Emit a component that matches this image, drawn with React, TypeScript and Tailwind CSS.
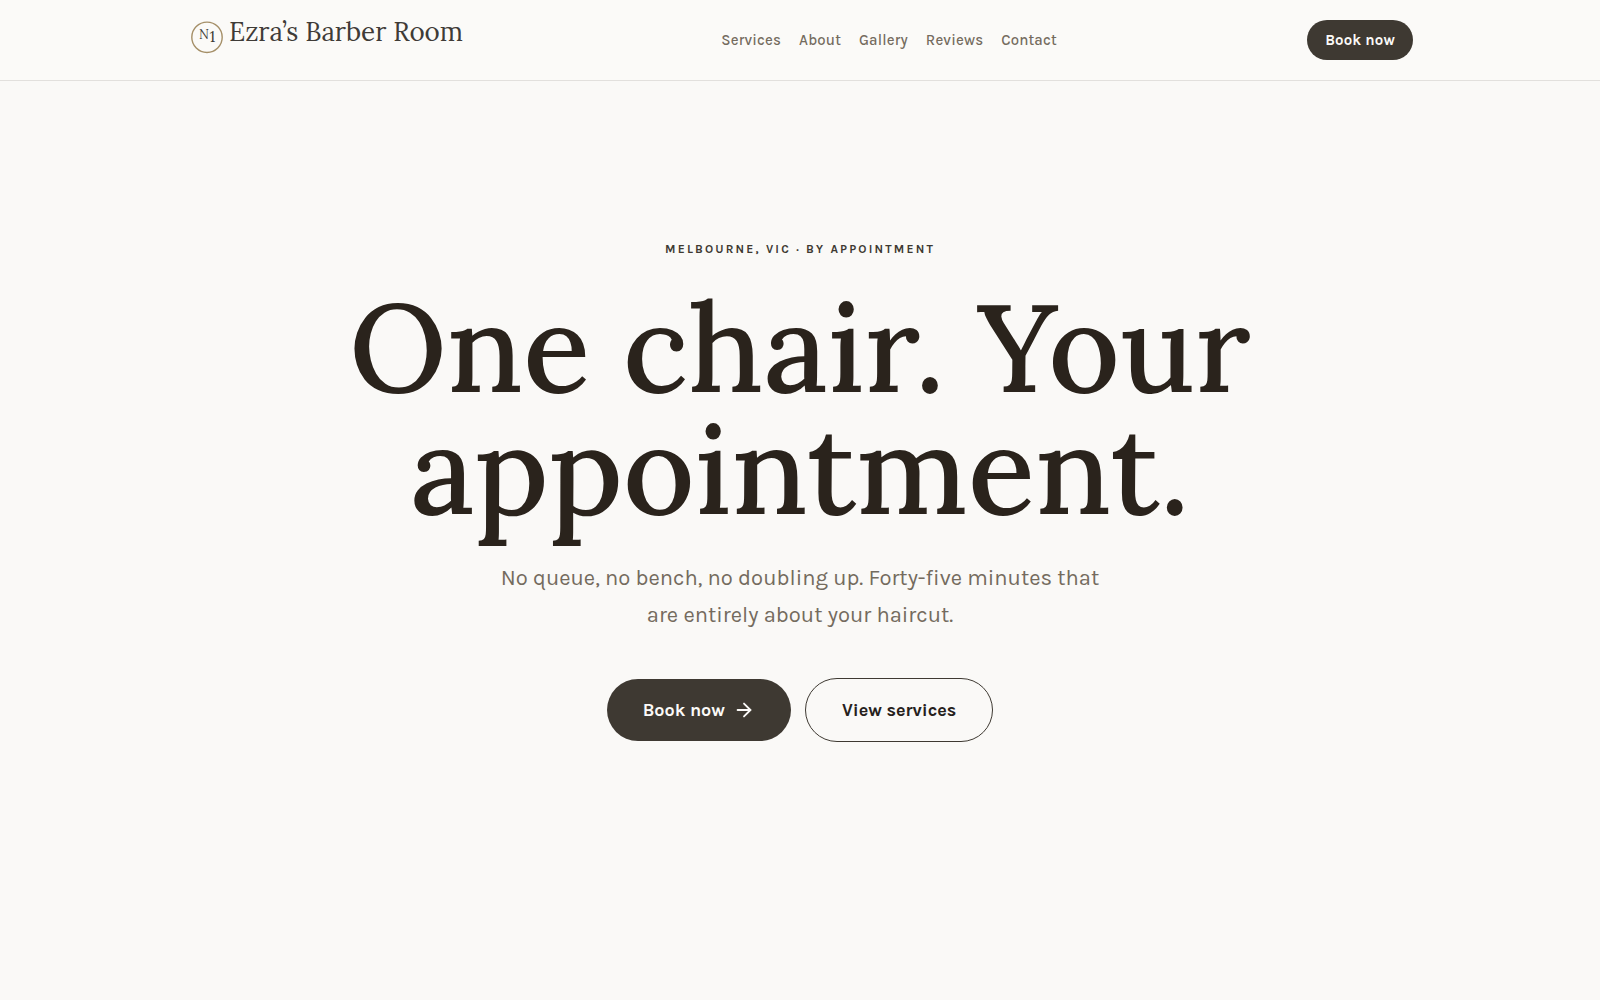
import React from 'react';
import { ArrowRight } from 'lucide-react';

interface NavItem {
  label: string;
  href: string;
}

const navItems: NavItem[] = [
  { label: 'Services', href: '#services' },
  { label: 'About', href: '#about' },
  { label: 'Gallery', href: '#gallery' },
  { label: 'Reviews', href: '#reviews' },
  { label: 'Contact', href: '#contact' }
];

const Logo: React.FC = () => (
  <a href="#top" aria-label="Ezra’s Barber Room" className="block shrink-0">
    <svg
      width="284"
      height="60"
      viewBox="0 -10 284 60"
      className="font-['Lora','Liberation_Serif',serif]"
    >
      <circle cx="20" cy="17.3" r="15.2" fill="none" stroke="#a58f68" strokeWidth="1.4" />
      <text x="12" y="19" fontSize="13" fill="#3f3b37">N</text>
      <text x="22.5" y="22" fontSize="16" fill="#3f3b37">1</text>
      <text x="42" y="21" fontSize="26" fill="#3f3b37">Ezra’s Barber Room</text>
    </svg>
  </a>
);

const Header: React.FC = () => (
  <header className="border-b border-[#e2e0dd] bg-[#fbfaf8]">
    <div className="mx-auto flex h-20 max-w-[1226px] items-center justify-between">
      <Logo />
      <nav className="flex items-center gap-[18px]">
        {navItems.map((item) => (
          <a
            key={item.label}
            href={item.href}
            className="text-[15px] leading-[22px] font-medium tracking-[0.01em] text-[#746b5e]"
          >
            {item.label}
          </a>
        ))}
      </nav>
      <button
        type="button"
        className="h-10 rounded-full bg-[#3e3932] px-[18px] text-[15px] leading-[22px] font-bold tracking-[0.01em] text-[#fbfaf8]"
      >
        Book now
      </button>
    </div>
  </header>
);

const Hero: React.FC = () => (
  <section className="flex flex-col items-center px-6 pt-40 pb-40 text-center">
    <p className="text-xs leading-4 font-bold tracking-[0.18em] text-[#3e3932] uppercase">
      Melbourne, VIC · By appointment
    </p>
    <h1 className="mt-[29px] max-w-[1000px] font-['Lora','Liberation_Serif',serif] text-[124px] leading-[122px] font-medium text-[#2a231c]">
      One chair. Your appointment.
    </h1>
    <p className="mt-[30px] max-w-[620px] text-[22px] leading-[37px] text-[#746b5e]">
      No queue, no bench, no doubling up. Forty-five minutes that are entirely about your haircut.
    </p>
    <div className="mt-11 flex flex-wrap items-center justify-center gap-[14px]">
      <button
        type="button"
        className="flex h-[62px] items-center gap-2 rounded-full bg-[#3e3932] px-9 text-[18px] font-bold text-[#fbfaf8]"
      >
        Book now
        <ArrowRight size={22} strokeWidth={2} />
      </button>
      <button
        type="button"
        className="h-16 rounded-full border border-[#3e3932] px-9 text-[18px] font-bold text-[#26211c]"
      >
        View services
      </button>
    </div>
  </section>
);

const App: React.FC = () => {
  return (
    <div
      id="top"
      className="min-h-screen bg-[#faf9f7] font-['Karla','Liberation_Sans',sans-serif] antialiased"
    >
      <Header />
      <main>
        <Hero />
      </main>
    </div>
  );
};

export default App;
